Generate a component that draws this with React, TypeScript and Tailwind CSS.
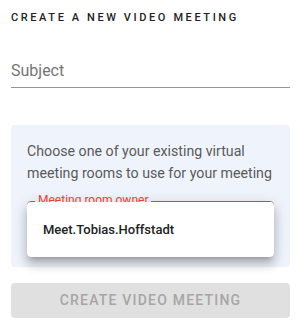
import React from 'react';

const App = () => {
  return (
    <div className="w-[297px] h-[324px] bg-white pl-[11px] pr-[7px] pt-[11px] font-['Roboto',sans-serif] overflow-hidden">
      {/* Heading */}
      <h2 className="text-[11px] leading-[13px] font-medium tracking-[2.6px] text-[#222]">
        CREATE A NEW VIDEO MEETING
      </h2>

      {/* Subject field */}
      <div className="mt-[37px] h-[27px] border-b border-[#949494]">
        <span className="block text-[16px] leading-[19px] text-[#757575]">Subject</span>
      </div>

      {/* Meeting room panel */}
      <div className="mt-[37px] h-[142px] bg-[#eff4fc] rounded-[4px] px-[16px] pt-[15px]">
        <p className="text-[14.2px] leading-[22px] text-[#5a5a5a]">
          Choose one of your existing virtual meeting rooms to use for your meeting
        </p>
        <div className="relative mt-[17px] h-[56px]">
          {/* outlined select behind the menu */}
          <div className="absolute inset-0 border border-[#f44336] rounded-[4px]" />
          <span className="absolute left-[8px] top-[-7px] px-[3px] bg-[#eff4fc] text-[12px] leading-[12px] text-[#f44336]">
            Meeting room owner
          </span>
          {/* open dropdown menu */}
          <div className="absolute left-0 right-0 top-[1px] h-[55px] bg-white rounded-[4px] shadow-[0_5px_5px_-3px_rgba(0,0,0,0.2),0_8px_10px_1px_rgba(0,0,0,0.14),0_3px_14px_2px_rgba(0,0,0,0.12)] flex items-center px-[16px]">
            <span className="text-[13px] font-medium text-[#222]">Meet.Tobias.Hoffstadt</span>
          </div>
        </div>
      </div>

      {/* Submit */}
      <button
        disabled
        className="mt-[16px] w-full h-[35px] bg-[#e0e0e0] rounded-[4px] text-[14px] font-medium tracking-[1.2px] text-[#a6a6a6]"
      >
        CREATE VIDEO MEETING
      </button>
    </div>
  );
};

export default App;
